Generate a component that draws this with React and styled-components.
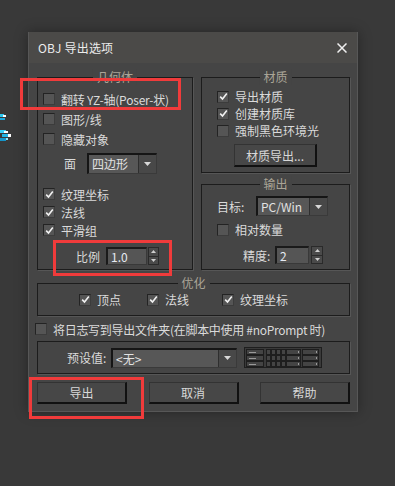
import React from 'react'
import styled, { createGlobalStyle } from 'styled-components'

const Global = createGlobalStyle`
  html, body { margin: 0; padding: 0; background: #393939; }
  body { font-family: "Noto Sans CJK SC", "Noto Sans", sans-serif; font-size: 12px; color: #dadada; }
`

const Page = styled.div`
  position: relative;
  width: 395px;
  height: 486px;
  overflow: hidden;
  background: #393939;
  padding: 32px 0 0 28px;
  box-sizing: border-box;
`

const Dialog = styled.div`
  width: 330px;
  height: 380px;
  box-sizing: border-box;
  background: #454545;
  border: 1px solid #575757;
  border-top: none;
  box-shadow: 0 0 12px rgba(0, 0, 0, 0.35);
  display: flex;
  flex-direction: column;
`

const TitleBar = styled.div`
  height: 31px;
  background: #4b4a48;
  display: flex;
  align-items: center;
  justify-content: space-between;
  padding: 0 9px 0 9px;
  font-size: 12px;
  color: #ececec;
  letter-spacing: 0.2px;
`

const Body = styled.div`
  padding: 14px 7px 0 8px;
  display: flex;
  flex-direction: column;
`

const TopGrid = styled.div`
  display: grid;
  grid-template-columns: 156px 149px;
  column-gap: 8px;
`

const Column = styled.div`
  display: flex;
  flex-direction: column;
  gap: 11px;
`

const Group = styled.div`
  position: relative;
  box-sizing: border-box;
  height: ${p => p.$h}px;
  margin-top: ${p => p.$mt || 0}px;
  border: 1px solid #1c1c1c;
  box-shadow: 1px 1px 0 #565656;
  padding: ${p => p.$pad || '0'};
  display: flex;
  flex-direction: column;
`

const Legend = styled.span`
  position: absolute;
  top: -9px;
  left: 50%;
  transform: translateX(-50%);
  background: #454545;
  padding: 0 4px;
  color: #aaa497;
  line-height: 16px;
  white-space: nowrap;
`

const CheckRow = styled.label`
  display: flex;
  align-items: center;
  gap: 6px;
  height: ${p => p.$h || 20}px;
  margin-left: ${p => p.$ml || 0}px;
  margin-top: ${p => p.$mt || 0}px;
  letter-spacing: ${p => p.$ls || 0}px;
  white-space: nowrap;
`

const Box = styled.span`
  width: 12px;
  height: 12px;
  box-sizing: border-box;
  flex: none;
  background: #555;
  border-top: 1px solid #232323;
  border-left: 1px solid #232323;
  border-right: 1px solid #3c3c3c;
  border-bottom: 1px solid #3c3c3c;
  display: flex;
  align-items: center;
  justify-content: center;
`

const Check = ({ on, label, ...rest }) => (
  <CheckRow {...rest}>
    <Box>
      {on && (
        <svg width="9" height="9" viewBox="0 0 9 9">
          <path d="M1.2 4.6 L3.5 7 L7.8 1.6" fill="none" stroke="#f2f2f2" strokeWidth="1.6" />
        </svg>
      )}
    </Box>
    <span>{label}</span>
  </CheckRow>
)

const FieldRow = styled.div`
  display: flex;
  align-items: center;
  height: ${p => p.$h || 20}px;
  margin-top: ${p => p.$mt || 0}px;
  padding-left: ${p => p.$pl || 0}px;
`

const FieldLabel = styled.span`
  width: ${p => p.$w}px;
  flex: none;
  white-space: nowrap;
`

const Select = styled.div`
  width: ${p => p.$w}px;
  height: ${p => p.$h || 20}px;
  box-sizing: border-box;
  display: flex;
  background: #575757;
  border-top: 2px solid #151515;
  border-left: 2px solid #151515;
  border-right: 1px solid #3a3a3a;
  border-bottom: 1px solid #3a3a3a;
`

const SelectText = styled.span`
  flex: 1;
  padding-left: 3px;
  line-height: ${p => p.$lh}px;
  color: #e2e2e2;
`

const SelectArrow = styled.span`
  width: 17px;
  flex: none;
  background: #484848;
  border-left: 1px solid #2e2e2e;
  display: flex;
  align-items: center;
  justify-content: center;
`

const Dropdown = ({ w, h = 20, text }) => (
  <Select $w={w} $h={h}>
    <SelectText $lh={h - 3}>{text}</SelectText>
    <SelectArrow>
      <svg width="7" height="4" viewBox="0 0 7 4"><path d="M0 0 H7 L3.5 4 Z" fill="#d8d8d8" /></svg>
    </SelectArrow>
  </Select>
)

const Input = styled.div`
  width: ${p => p.$w}px;
  height: 18px;
  box-sizing: border-box;
  background: #555;
  border-top: 2px solid #1a1a1a;
  border-left: 2px solid #1a1a1a;
  border-right: 1px solid #393939;
  border-bottom: 1px solid #393939;
  padding-left: 3px;
  line-height: 15px;
  color: #e6eaf2;
`

const Spin = styled.div`
  width: ${p => p.$w}px;
  height: 18px;
  margin-left: ${p => p.$gap}px;
  box-sizing: border-box;
  display: flex;
  flex-direction: column;
  border: 1px solid #2a2a2a;
  background: #4a4a4a;
`

const SpinHalf = styled.span`
  flex: 1;
  display: flex;
  align-items: center;
  justify-content: center;
  border-top: ${p => (p.$down ? '1px solid #2a2a2a' : 'none')};
`

const Spinner = ({ w, gap }) => (
  <Spin $w={w} $gap={gap}>
    <SpinHalf>
      <svg width="5" height="3" viewBox="0 0 5 3"><path d="M0 3 H5 L2.5 0 Z" fill="#cfcfcf" /></svg>
    </SpinHalf>
    <SpinHalf $down>
      <svg width="5" height="3" viewBox="0 0 5 3"><path d="M0 0 H5 L2.5 3 Z" fill="#cfcfcf" /></svg>
    </SpinHalf>
  </Spin>
)

const Button = styled.div`
  width: ${p => p.$w}px;
  height: ${p => p.$h}px;
  box-sizing: border-box;
  background: #474747;
  border-top: 1px solid #333;
  border-left: 1px solid #333;
  border-right: 2px solid #111;
  border-bottom: 2px solid #111;
  display: flex;
  align-items: center;
  justify-content: center;
  color: #d8d8d8;
  align-self: ${p => p.$self || 'auto'};
  margin-top: ${p => p.$mt || 0}px;
  margin-left: ${p => p.$ml || 0}px;
`

const OptGrid = styled.div`
  display: grid;
  grid-template-columns: 68px 75px auto;
  padding-left: 41px;
  align-items: center;
  height: 100%;
`

const ButtonBar = styled.div`
  display: flex;
  justify-content: space-between;
  margin-top: 8px;
`

const RedBox = styled.div`
  position: absolute;
  left: ${p => p.$x}px;
  top: ${p => p.$y}px;
  width: ${p => p.$w}px;
  height: ${p => p.$h}px;
  box-sizing: border-box;
  border: 3px solid #f03b3b;
  pointer-events: none;
`

const Sparks = styled.svg`
  position: absolute;
  left: 0;
  top: 110px;
`

const PresetIcon = () => {
  const rows = [0, 1, 2]
  return (
    <svg width="78" height="21" viewBox="0 0 78 21" style={{ marginLeft: 7 }}>
      <rect x="0.5" y="0.5" width="77" height="20" fill="#3a3a3a" stroke="#1e1e1e" />
      {rows.map(i => {
        const y = 2 + i * 6
        return (
          <g key={i}>
            <rect x="2.5" y={y + 0.5} width="17" height="5" fill="#444" stroke="#1e1e1e" />
            <rect x="5" y={y + 3} width="7" height="1" fill="#9a9a9a" />
            {[22, 27, 32, 37].map(x => (
              <rect key={x} x={x + 0.5} y={y + 0.5} width="4" height="5" fill="#444" stroke="#1e1e1e" />
            ))}
            <rect x="42.5" y={y + 0.5} width="14" height="5" fill="#444" stroke="#1e1e1e" />
            <rect x="54" y={y + 2} width="1" height="2" fill="#9a9a9a" />
            <rect x="58.5" y={y + 0.5} width="16" height="5" fill="#444" stroke="#1e1e1e" />
            <rect x="72" y={y + 2} width="1" height="2" fill="#9a9a9a" />
          </g>
        )
      })}
    </svg>
  )
}

export default function App() {
  return (
    <>
      <Global />
      <Page>
        <Sparks width="16" height="36" viewBox="0 0 16 36">
          <rect x="0" y="4" width="4" height="3" fill="#2ec7f0" />
          <rect x="3" y="5" width="3" height="2" fill="#ffffff" />
          <rect x="0" y="8" width="5" height="2" fill="#1aa8dc" />
          <rect x="0" y="20" width="6" height="3" fill="#39d0f6" />
          <rect x="4" y="21" width="4" height="2" fill="#ffffff" />
          <rect x="2" y="24" width="8" height="3" fill="#22b6e6" />
          <rect x="8" y="24" width="3" height="3" fill="#ffffff" />
          <rect x="0" y="28" width="6" height="3" fill="#1595c8" />
          <rect x="6" y="28" width="2" height="2" fill="#8fe8ff" />
        </Sparks>
        <Dialog>
          <TitleBar>
            <span>OBJ 导出选项</span>
            <svg width="10" height="10" viewBox="0 0 10 10" style={{ marginRight: 1 }}>
              <path d="M0.5 0.5 L9.5 9.5 M9.5 0.5 L0.5 9.5" stroke="#f0f0f0" strokeWidth="1.5" />
            </svg>
          </TitleBar>
          <Body>
            <TopGrid>
              <Group $h={193} $pad="11px 0 0 5px">
                <Legend>几何体</Legend>
                <Check label="翻转 YZ-轴(Poser-状)" $ls={-0.2} />
                <Check label="图形/线" />
                <Check label="隐藏对象" />
                <FieldRow $h={21} $mt={4} $pl={21}>
                  <FieldLabel $w={23}>面</FieldLabel>
                  <Dropdown w={70} h={21} text="四边形" />
                </FieldRow>
                <Check on label="纹理坐标" $h={18} $mt={11} />
                <Check on label="法线" $h={18} />
                <Check on label="平滑组" $h={18} />
                <FieldRow $h={18} $mt={8} $pl={33}>
                  <FieldLabel $w={30}>比例</FieldLabel>
                  <Input $w={41}>1.0</Input>
                  <Spinner w={11} gap={1} />
                </FieldRow>
              </Group>
              <Column>
                <Group $h={96} $pad="10px 0 0 15px">
                  <Legend>材质</Legend>
                  <Check on label="导出材质" $h={17} />
                  <Check on label="创建材质库" $h={17} />
                  <Check label="强制黑色环境光" $h={17} />
                  <Button $w={83} $h={23} $mt={5} $ml={-15} $self="center">材质导出...</Button>
                </Group>
                <Group $h={86} $pad="11px 0 0 15px">
                  <Legend>输出</Legend>
                  <FieldRow $h={20}>
                    <FieldLabel $w={39}>目标:</FieldLabel>
                    <Dropdown w={72} text="PC/Win" />
                  </FieldRow>
                  <Check label="相对数量" $h={17} $mt={5} />
                  <FieldRow $h={18} $mt={8} $pl={26}>
                    <FieldLabel $w={32}>精度:</FieldLabel>
                    <Input $w={34}>2</Input>
                    <Spinner w={12} gap={2} />
                  </FieldRow>
                </Group>
              </Column>
            </TopGrid>
            <Group $h={33} $mt={13}>
              <Legend>优化</Legend>
              <OptGrid>
                <Check on label="顶点" />
                <Check on label="法线" />
                <Check on label="纹理坐标" />
              </OptGrid>
            </Group>
            <Check label="将日志写到导出文件夹(在脚本中使用 #noPrompt 时)" $h={18} $mt={4} $ml={-2} $ls={-0.3} />
            <Group $h={33} $mt={3}>
              <FieldRow $h={31} $pl={29}>
                <FieldLabel $w={44}>预设值:</FieldLabel>
                <Dropdown w={126} text="<无>" />
                <PresetIcon />
              </FieldRow>
            </Group>
            <ButtonBar>
              <Button $w={90} $h={22}>导出</Button>
              <Button $w={90} $h={22}>取消</Button>
              <Button $w={90} $h={22}>帮助</Button>
            </ButtonBar>
          </Body>
        </Dialog>
        <RedBox $x={20} $y={78} $w={161} $h={32} />
        <RedBox $x={53} $y={240} $w={119} $h={36} />
        <RedBox $x={29} $y={377} $w={115} $h={42} />
      </Page>
    </>
  )
}
